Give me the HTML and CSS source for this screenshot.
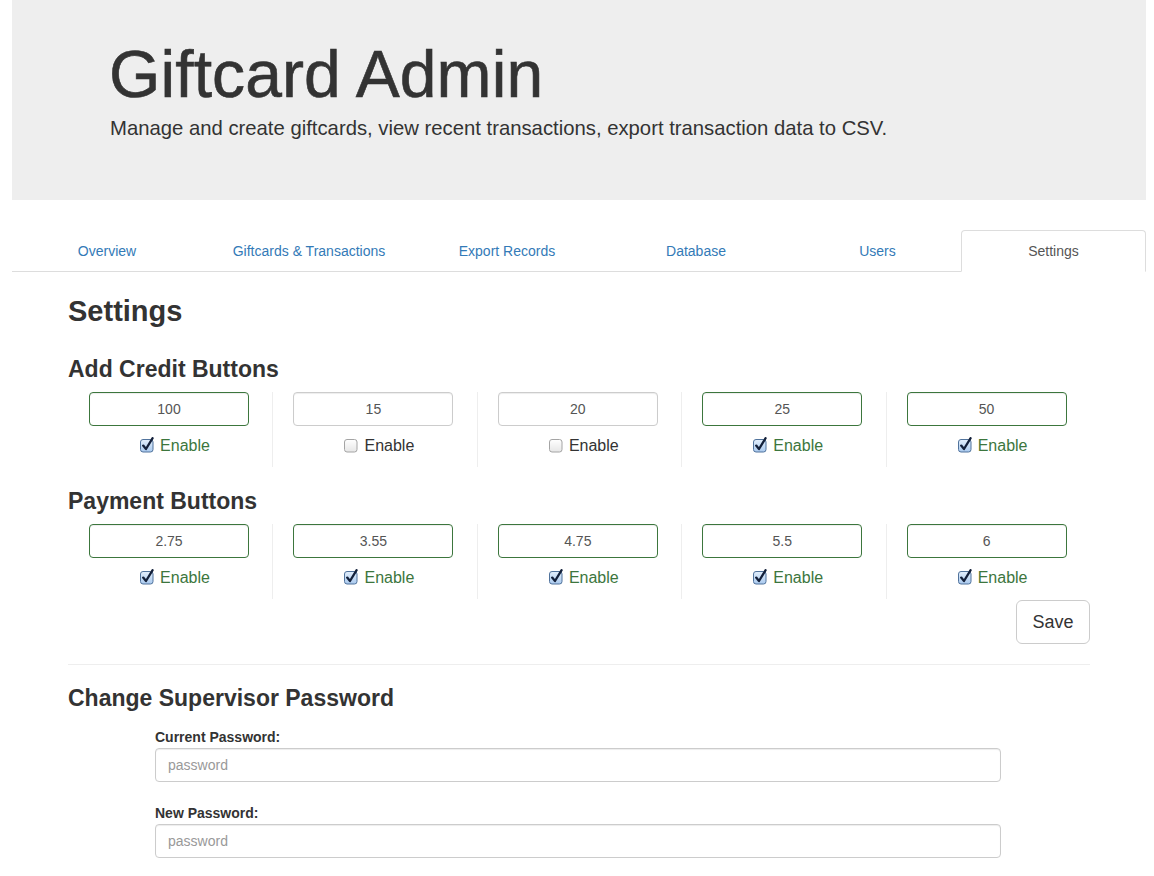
FILE: index.html
```html
<!DOCTYPE html>
<html>
<head>
<meta charset="utf-8">
<title>Giftcard Admin</title>
<link rel="stylesheet" href="styles.css">
</head>
<body>
<div class="page">
  <header class="jumbotron">
    <h1>Giftcard Admin</h1>
    <p>Manage and create giftcards, view recent transactions, export transaction data to CSV.</p>
  </header>

  <nav class="tabs">
    <a class="tab" href="#">Overview</a>
    <a class="tab" href="#">Giftcards &amp; Transactions</a>
    <a class="tab" href="#">Export Records</a>
    <a class="tab" href="#">Database</a>
    <a class="tab" href="#">Users</a>
    <a class="tab active" href="#">Settings</a>
  </nav>

  <main class="content">
    <h2 class="page-title">Settings</h2>

    <h3 class="section-title">Add Credit Buttons</h3>
    <div class="btn-row">
      <div class="btn-col">
        <input class="amount on" type="text" value="100">
        <label class="enable on"><svg class="cb" width="15" height="16" viewBox="0 0 15 16"><use href="#cb-on"/></svg>Enable</label>
      </div>
      <div class="btn-col">
        <input class="amount" type="text" value="15">
        <label class="enable"><svg class="cb" width="15" height="16" viewBox="0 0 15 16"><use href="#cb-off"/></svg>Enable</label>
      </div>
      <div class="btn-col">
        <input class="amount" type="text" value="20">
        <label class="enable"><svg class="cb" width="15" height="16" viewBox="0 0 15 16"><use href="#cb-off"/></svg>Enable</label>
      </div>
      <div class="btn-col">
        <input class="amount on" type="text" value="25">
        <label class="enable on"><svg class="cb" width="15" height="16" viewBox="0 0 15 16"><use href="#cb-on"/></svg>Enable</label>
      </div>
      <div class="btn-col">
        <input class="amount on" type="text" value="50">
        <label class="enable on"><svg class="cb" width="15" height="16" viewBox="0 0 15 16"><use href="#cb-on"/></svg>Enable</label>
      </div>
    </div>

    <h3 class="section-title second">Payment Buttons</h3>
    <div class="btn-row">
      <div class="btn-col">
        <input class="amount on" type="text" value="2.75">
        <label class="enable on"><svg class="cb" width="15" height="16" viewBox="0 0 15 16"><use href="#cb-on"/></svg>Enable</label>
      </div>
      <div class="btn-col">
        <input class="amount on" type="text" value="3.55">
        <label class="enable on"><svg class="cb" width="15" height="16" viewBox="0 0 15 16"><use href="#cb-on"/></svg>Enable</label>
      </div>
      <div class="btn-col">
        <input class="amount on" type="text" value="4.75">
        <label class="enable on"><svg class="cb" width="15" height="16" viewBox="0 0 15 16"><use href="#cb-on"/></svg>Enable</label>
      </div>
      <div class="btn-col">
        <input class="amount on" type="text" value="5.5">
        <label class="enable on"><svg class="cb" width="15" height="16" viewBox="0 0 15 16"><use href="#cb-on"/></svg>Enable</label>
      </div>
      <div class="btn-col">
        <input class="amount on" type="text" value="6">
        <label class="enable on"><svg class="cb" width="15" height="16" viewBox="0 0 15 16"><use href="#cb-on"/></svg>Enable</label>
      </div>
    </div>

    <div class="save-row">
      <button class="btn-save" type="button">Save</button>
    </div>

    <hr class="divider">

    <h3 class="section-title pw-title">Change Supervisor Password</h3>
    <form class="pw-form">
      <div class="form-group">
        <label class="field-label">Current Password:</label>
        <input class="field" type="password" placeholder="password">
      </div>
      <div class="form-group">
        <label class="field-label">New Password:</label>
        <input class="field" type="password" placeholder="password">
      </div>
    </form>
  </main>
</div>

<svg class="defs" width="0" height="0" aria-hidden="true">
  <defs>
    <linearGradient id="g-on" x1="0" y1="0" x2="0" y2="1">
      <stop offset="0" stop-color="#e3effc"/>
      <stop offset="1" stop-color="#a9c9ee"/>
    </linearGradient>
    <linearGradient id="g-off" x1="0" y1="0" x2="0" y2="1">
      <stop offset="0" stop-color="#ffffff"/>
      <stop offset="1" stop-color="#e6e6e6"/>
    </linearGradient>
    <symbol id="cb-on" viewBox="0 0 15 16">
      <rect x="0.5" y="2.5" width="12.5" height="12.5" rx="2.5" fill="url(#g-on)" stroke="#51739c"/>
      <path d="M3.2 8.6 L6 12 L12.6 1.2" fill="none" stroke="#13203a" stroke-width="2.3" stroke-linecap="round" stroke-linejoin="round"/>
    </symbol>
    <symbol id="cb-off" viewBox="0 0 15 16">
      <rect x="0.5" y="2.5" width="12.5" height="12.5" rx="2.5" fill="url(#g-off)" stroke="#a4a4a4"/>
    </symbol>
  </defs>
</svg>
</body>
</html>
```

FILE: styles.css
```css
* {
  box-sizing: border-box;
}

html, body {
  margin: 0;
  padding: 0;
  background: #fff;
}

body {
  font-family: "Liberation Sans", Arial, Helvetica, sans-serif;
  font-size: 14px;
  line-height: 1.42857;
  color: #333;
}

.page {
  margin: 0 8px 0 12px;
}

/* Jumbotron */
.jumbotron {
  background: #eeeeee;
  height: 200px;
  padding: 38px 0 0 97px;
}

.jumbotron h1 {
  margin: 0;
  font-size: 66px;
  line-height: 1.1;
  font-weight: 400;
  color: #333;
  letter-spacing: 0.1px;
  -webkit-text-stroke: 0.6px #333;
}

.jumbotron p {
  margin: 3px 0 0 1px;
  font-size: 20.3px;
  line-height: 1.4;
  font-weight: 400;
  color: #333;
}

/* Tabs */
.tabs {
  margin-top: 30px;
  display: grid;
  grid-template-columns: 190fr 214fr 182fr 196fr 167fr 185fr;
  height: 42px;
}

.tab {
  display: flex;
  align-items: center;
  justify-content: center;
  border-bottom: 1px solid #ddd;
  color: #337ab7;
  text-decoration: none;
  font-size: 14px;
  padding-top: 2px;
}

.tab.active {
  color: #555;
  border: 1px solid #ddd;
  border-bottom-color: #fff;
  border-radius: 4px 4px 0 0;
  background: #fff;
  padding-top: 1px;
}

/* Content */
.content {
  padding: 0 56px;
}

.page-title {
  margin: 24px 0 0;
  font-size: 29px;
  line-height: 1.1;
  font-weight: 700;
  color: #333;
}

.section-title {
  margin: 29px 0 10px;
  font-size: 23px;
  line-height: 1.1;
  font-weight: 700;
  color: #333;
}

.section-title.second {
  margin-top: 22px;
}

.btn-row {
  display: grid;
  grid-template-columns: repeat(5, 1fr);
}

.btn-col {
  padding: 0 0 11px 21px;
  display: flex;
  flex-direction: column;
  align-items: flex-start;
}

.btn-col + .btn-col {
  border-left: 1px solid #eee;
  padding-left: 20px;
}

.amount {
  width: 160px;
  height: 34px;
  padding: 6px 12px;
  border: 1px solid #ccc;
  border-radius: 4px;
  font-family: "Liberation Sans", Arial, Helvetica, sans-serif;
  font-size: 14px;
  color: #555;
  text-align: center;
  background: #fff;
  box-shadow: inset 0 1px 1px rgba(0, 0, 0, 0.075);
  outline: none;
}

.amount.on {
  border-color: #3c763d;
}

.enable {
  width: 160px;
  margin-top: 10px;
  display: flex;
  align-items: center;
  justify-content: center;
  padding-left: 12px;
  height: 20px;
  font-size: 16px;
  color: #333;
}

.enable.on {
  color: #3c763d;
}

.cb {
  display: block;
  margin-right: 5px;
  margin-top: -3px;
  flex: none;
}

.save-row {
  display: flex;
  justify-content: flex-end;
  margin-top: 1px;
}

.btn-save {
  width: 74px;
  height: 44px;
  font-family: "Liberation Sans", Arial, Helvetica, sans-serif;
  font-size: 18px;
  color: #333;
  background: #fff;
  border: 1px solid #ccc;
  border-radius: 6px;
  padding: 0;
}

.divider {
  margin: 20px 0 0;
  border: 0;
  border-top: 1px solid #eee;
  height: 0;
}

.section-title.pw-title {
  margin-top: 21px;
  margin-bottom: 15px;
}

.pw-form {
  padding-left: 87px;
  width: 933px;
}

.form-group {
  margin-bottom: 21px;
}

.field-label {
  display: block;
  font-weight: 700;
  font-size: 14px;
  line-height: 20px;
  margin-bottom: 1px;
  color: #333;
}

.field {
  display: block;
  width: 100%;
  height: 34px;
  padding: 6px 12px;
  border: 1px solid #ccc;
  border-radius: 4px;
  font-family: "Liberation Sans", Arial, Helvetica, sans-serif;
  font-size: 14px;
  color: #555;
  background: #fff;
  box-shadow: inset 0 1px 1px rgba(0, 0, 0, 0.075);
  outline: none;
}

.field::placeholder {
  color: #999;
}

.defs {
  position: absolute;
  width: 0;
  height: 0;
  overflow: hidden;
}
```
